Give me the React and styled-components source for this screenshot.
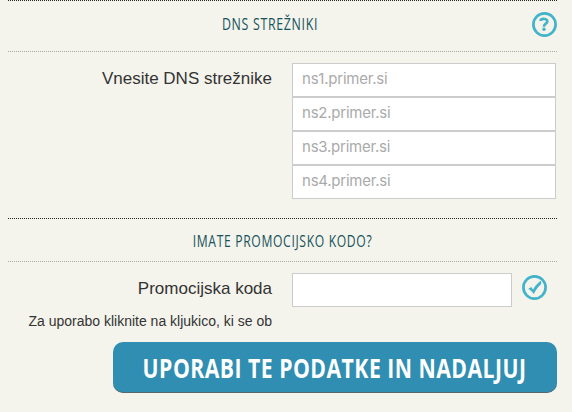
import React from 'react';
import styled, { createGlobalStyle } from 'styled-components';

const theme = {
  background: '#f4f3ec',
  text: '#333333',
  heading: '#17545b',
  icon: '#41b3ca',
  button: '#2f8eb2',
  border: '#cccccc',
};

const GlobalStyle = createGlobalStyle`
  * {
    box-sizing: border-box;
  }
  body {
    margin: 0;
    background: ${theme.background};
    color: ${theme.text};
    font-family: 'Liberation Sans', Arial, sans-serif;
  }
`;

const Form = styled.form`
  width: 549px;
  margin-left: 8px;
`;

const SectionHeader = styled.header`
  display: flex;
  align-items: center;
  justify-content: center;
  height: ${({ $height }) => $height}px;
  padding-top: ${({ $top }) => $top || 0}px;
  padding-bottom: ${({ $bottom }) => $bottom || 0}px;
  border-top: 1px dotted #222;
  border-bottom: 1px dotted #aaa;
`;

const Title = styled.h2`
  flex: 1;
  margin: 0;
  color: ${theme.heading};
  font-family: 'Open Sans', sans-serif;
  font-size: 16.5px;
  font-weight: 400;
  line-height: 20px;
  letter-spacing: 0.9px;
  text-align: center;
  white-space: nowrap;
  transform: scaleX(${({ $scale }) => $scale});
`;

const IconButton = styled.button`
  display: block;
  width: 25px;
  height: 25px;
  padding: 0;
  border: 0;
  background: none;

  svg {
    display: block;
  }
`;

const Row = styled.div`
  display: grid;
  grid-template-columns: 264px 264px;
  column-gap: 20px;
  padding-top: 11px;
`;

const Label = styled.label`
  font-size: 17px;
  line-height: 20px;
  padding-top: 6px;
  text-align: right;
  white-space: nowrap;
`;

const Fields = styled.div`
  display: flex;
  flex-direction: column;
`;

const Input = styled.input`
  width: ${({ $width }) => $width || 264}px;
  height: 34px;
  padding: 0 9px 3px;
  border: 1px solid ${theme.border};
  border-radius: 0;
  background: #fff;
  font-family: Inter, sans-serif;
  font-size: 15px;
  letter-spacing: -0.23px;

  &::placeholder {
    color: #aaa;
    opacity: 1;
  }
`;

const PromoField = styled.div`
  display: flex;
  gap: 10px;

  ${IconButton} {
    margin-top: 2px;
  }
`;

const PromoSection = styled.section`
  margin-top: 19px;
`;

const Note = styled.p`
  width: 264px;
  margin: 6px 0 0;
  font-size: 14px;
  line-height: 16px;
  text-align: right;
  white-space: nowrap;
`;

const Submit = styled.button`
  display: flex;
  align-items: center;
  justify-content: center;
  width: 444px;
  height: 51px;
  margin: 13px 0 0 auto;
  padding: 2px 0 0;
  border: 0;
  border-bottom: 1px solid #58676b;
  border-radius: 10px;
  background: ${theme.button};
  color: #fff;
`;

const SubmitText = styled.span`
  font-family: 'Open Sans', sans-serif;
  font-size: 26px;
  font-weight: 700;
  line-height: 36px;
  letter-spacing: 0.6px;
  white-space: nowrap;
  transform: scaleX(0.815);
`;

const HelpIcon = () => (
  <svg width="25" height="25" viewBox="0 0 25 25" fill="none" stroke={theme.icon}>
    <circle cx="12.5" cy="12.5" r="11.1" strokeWidth="2.7" />
    <path d="M8.8 8.9V7.8C10.5 6.6 15.3 6.3 15.3 9.4C15.3 11.9 11.9 11.5 11.9 14.7" strokeWidth="2.7" />
    <circle cx="12" cy="17.3" r="1.7" fill={theme.icon} stroke="none" />
  </svg>
);

const CheckIcon = () => (
  <svg width="25" height="25" viewBox="0 0 25 25" fill="none">
    <circle cx="12.5" cy="12.5" r="11.1" stroke={theme.icon} strokeWidth="2.7" />
    <path d="M6.2 13.9L9.1 12.1L11 14.4C13 10.9 15.5 8 19 5.7L19.2 9.1C16.4 11.4 14 14.8 11.8 19C10.3 16.7 8.4 14.7 6.2 13.9Z" fill={theme.icon} />
  </svg>
);

const servers = ['ns1.primer.si', 'ns2.primer.si', 'ns3.primer.si', 'ns4.primer.si'];

const App = () => (
  <>
    <GlobalStyle />
    <Form onSubmit={e => e.preventDefault()}>
      <section>
        <SectionHeader $height={52} $bottom={4}>
          <Title $scale={0.75}>DNS STREŽNIKI</Title>
          <IconButton type="button" aria-label="Pomoč">
            <HelpIcon />
          </IconButton>
        </SectionHeader>
        <Row>
          <Label htmlFor="ns1">Vnesite DNS strežnike</Label>
          <Fields>
            {servers.map((server, i) => (
              <Input key={server} id={`ns${i + 1}`} placeholder={server} />
            ))}
          </Fields>
        </Row>
      </section>

      <PromoSection>
        <SectionHeader $height={44} $top={2}>
          <Title $scale={0.735}>IMATE PROMOCIJSKO KODO?</Title>
        </SectionHeader>
        <Row>
          <Label htmlFor="promo">Promocijska koda</Label>
          <PromoField>
            <Input id="promo" $width={220} />
            <IconButton type="button" aria-label="Potrdi">
              <CheckIcon />
            </IconButton>
          </PromoField>
        </Row>
        <Note>Za uporabo kliknite na kljukico, ki se ob</Note>
      </PromoSection>

      <Submit type="submit">
        <SubmitText>UPORABI TE PODATKE IN NADALJUJ</SubmitText>
      </Submit>
    </Form>
  </>
);

export default App;
